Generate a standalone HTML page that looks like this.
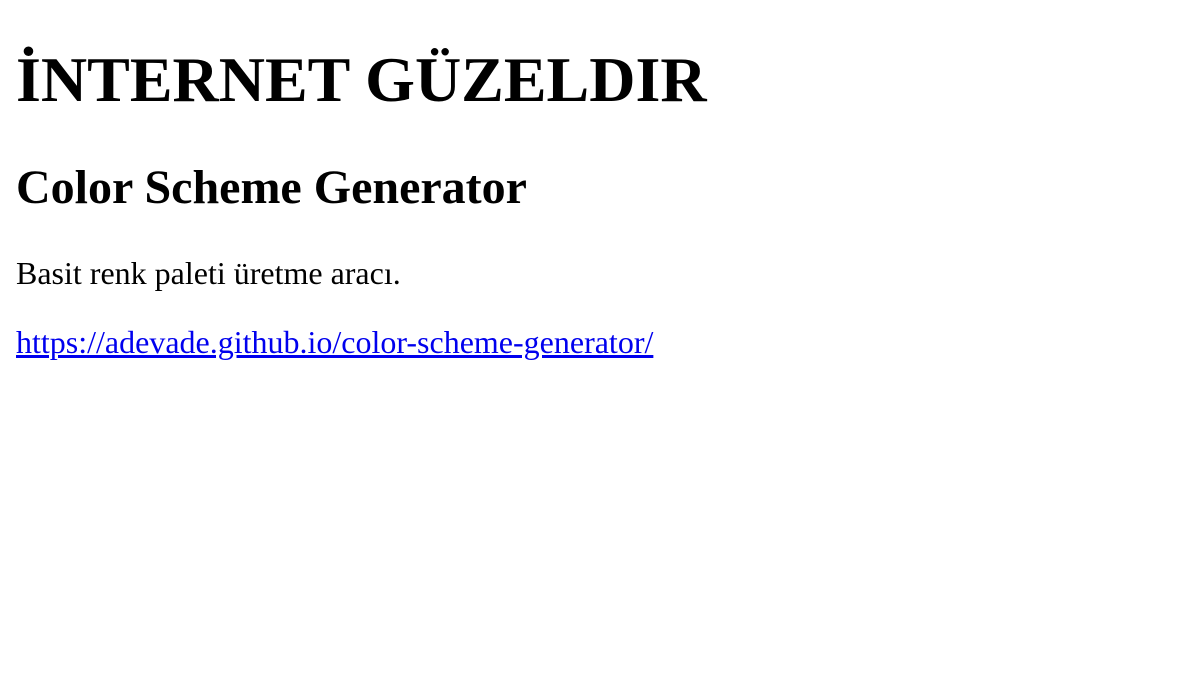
<!DOCTYPE html>
<html>
<head>
<meta charset="utf-8">
<style>
html,body{background:#fff;}
body{margin:16px;font-family:"Liberation Serif","Times New Roman",serif;font-size:32px;color:#000;}
h1{font-size:64px;margin:42.88px 0;font-weight:bold;}
h2{font-size:48px;margin:39.84px 0;font-weight:bold;}
p{margin:32px 0;}
a{color:#0000ee;text-decoration:underline;}
</style>
</head>
<body>
<h1>İNTERNET GÜZELDIR</h1>
<h2>Color Scheme Generator</h2>
<p>Basit renk paleti üretme aracı.</p>
<p><a>https://adevade.github.io/color-scheme-generator/</a></p>
</body>
</html>
